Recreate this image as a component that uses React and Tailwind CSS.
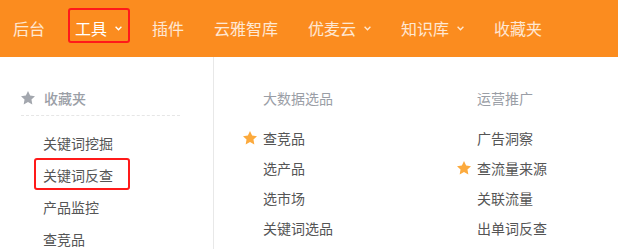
import React from 'react';

const FONT = { fontFamily: '"Noto Sans CJK SC", "Noto Sans", sans-serif' };

const navItems = [
  { label: '后台' },
  { label: '工具', menu: true, active: true },
  { label: '插件' },
  { label: '云雅智库' },
  { label: '优麦云', menu: true },
  { label: '知识库', menu: true },
  { label: '收藏夹' },
];

const Chevron = () => (
  <svg width="7" height="5" viewBox="0 0 7 5" className="ml-[8px] mt-[2px]">
    <polyline points="0.6,0.8 3.5,3.8 6.4,0.8" fill="none" stroke="currentColor" strokeWidth="1.3" />
  </svg>
);

const Star = ({ color, size = 15 }) => (
  <svg width={size} height={size} viewBox="0 0 24 24" className="shrink-0">
    <path
      d="M12 1.5l3.2 6.7 7.3 1-5.3 5.1 1.3 7.3L12 18.1l-6.5 3.5 1.3-7.3-5.3-5.1 7.3-1z"
      fill={color}
    />
  </svg>
);

const sections = [
  {
    title: '大数据选品',
    items: [{ label: '查竞品', star: true }, { label: '选产品' }, { label: '选市场' }, { label: '关键词选品' }],
  },
  {
    title: '运营推广',
    items: [{ label: '广告洞察' }, { label: '查流量来源', star: true }, { label: '关联流量' }, { label: '出单词反查' }],
  },
];

const favourites = ['关键词挖掘', '关键词反查', '产品监控', '查竞品'];

export default function App() {
  return (
    <div className="w-[618px] h-[249px] bg-white overflow-hidden" style={FONT}>
      <header className="h-[57px] bg-[#fb8c1f] flex items-stretch gap-[30px] pl-[13px] pb-[2px] text-[16px]">
        {navItems.map((item) => (
          <div
            key={item.label}
            className={`relative flex items-center ${item.active ? 'text-white' : 'text-white/80'}`}
          >
            <span>{item.label}</span>
            {item.menu && <Chevron />}
            {item.active && (
              <span className="absolute left-[-7px] top-[8px] w-[62px] h-[35px] border-2 border-[#ff1a1a] rounded-[3px]" />
            )}
          </div>
        ))}
      </header>

      <div className="flex h-[192px]">
        <div className="w-[214px] shrink-0 border-r border-[#e8e8e8] pl-[20px] pt-[31px]">
          <div className="flex items-center h-[20px] text-[14px] font-medium text-[#9a9ea6]">
            <Star color="#a3a7ae" size={16} />
            <span className="ml-[8px]">收藏夹</span>
          </div>
          <div className="w-[159px] ml-[1px] mt-[7px] border-t border-dashed border-[#e6e6e6]" />
          <ul className="mt-[11px] text-[14px] text-[#555]">
            {favourites.map((label, i) => (
              <li key={label} className="relative h-[32px] leading-[32px] pl-[23px]">
                {label}
                {i === 1 && (
                  <span className="absolute left-[14px] top-[-1px] w-[96px] h-[32px] border-2 border-[#ff1a1a] rounded-[3px]" />
                )}
              </li>
            ))}
          </ul>
        </div>

        {sections.map((sec, idx) => (
          <div key={sec.title} className={`pt-[31px] ${idx === 0 ? 'ml-[28px] w-[214px]' : ''}`}>
            <div className="h-[20px] leading-[20px] pl-[21px] text-[14px] text-[#9a9ea6]">{sec.title}</div>
            <ul className="mt-[15px] text-[14px] text-[#555]">
              {sec.items.map((it) => (
                <li key={it.label} className="flex items-center h-[30px]">
                  <span className="w-[21px] flex items-center">{it.star && <Star color="#fcaa3d" size={16} />}</span>
                  <span>{it.label}</span>
                </li>
              ))}
            </ul>
          </div>
        ))}
      </div>
    </div>
  );
}
